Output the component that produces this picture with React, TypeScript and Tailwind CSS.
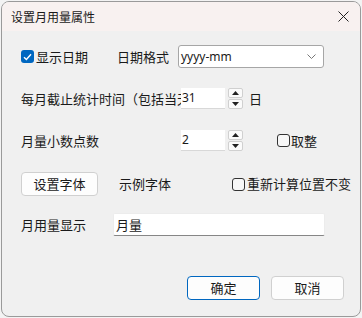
import React from "react";

const font = { fontFamily: '"Noto Sans CJK SC", "Noto Sans", sans-serif' };

function Spinner() {
  return (
    <div className="ml-[3px] flex h-[21px] w-[15px] flex-col justify-between">
      <div className="flex h-[10px] w-[15px] items-center justify-center rounded-[2px] border border-[#d0d0d0] bg-[#fbfbfb]">
        <svg width="7" height="4" viewBox="0 0 7 4"><path d="M3.5 0 L7 4 L0 4 Z" fill="#222" /></svg>
      </div>
      <div className="flex h-[10px] w-[15px] items-center justify-center rounded-[2px] border border-[#d0d0d0] bg-[#fbfbfb]">
        <svg width="7" height="4" viewBox="0 0 7 4"><path d="M0 0 L7 0 L3.5 4 Z" fill="#222" /></svg>
      </div>
    </div>
  );
}

function Box({ checked = false }: { checked?: boolean }) {
  if (checked)
    return (
      <div className="flex h-[13px] w-[13px] items-center justify-center rounded-[3px] bg-[#0067c0]">
        <svg width="9" height="8" viewBox="0 0 9 8"><path d="M1 4.2 L3.4 6.5 L8 1.3" stroke="#fff" strokeWidth="1.4" fill="none" /></svg>
      </div>
    );
  return <div className="h-[13px] w-[13px] rounded-[3px] border border-[#333] bg-[#f7f7f7]" />;
}

export default function App() {
  return (
    <div className="h-[318px] w-[362px] bg-[#f3f3f3] p-px text-[13px] text-[#1a1a1a]" style={font}>
      <div className="flex h-[316px] w-[360px] flex-col overflow-hidden rounded-[8px] border border-[#9a9a9a] bg-[#f0f0f0]">
        <div className="flex h-[29px] shrink-0 items-center justify-between bg-[#f8f1f0] pl-[9px] pr-[9px]">
          <span className="text-[12px]">设置月用量属性</span>
          <svg width="11" height="11" viewBox="0 0 11 11" className="mr-[2px]"><path d="M0.5 0.5 L10.5 10.5 M10.5 0.5 L0.5 10.5" stroke="#222" strokeWidth="1" /></svg>
        </div>
        <div className="flex flex-col pl-[19px]">
          <div className="mt-[14px] flex h-[23px] items-center">
            <Box checked />
            <span className="ml-[2px] w-[81px]">显示日期</span>
            <span className="w-[61px]">日期格式</span>
            <div className="flex h-[23px] w-[146px] items-center justify-between rounded-[3px] border border-[#a6a6a6] bg-white pl-[2px] pr-[7px]">
              <span className="text-[12px]" style={{ fontFamily: '"Noto Sans", sans-serif' }}>yyyy-mm</span>
              <svg width="9" height="5" viewBox="0 0 9 5"><path d="M0.5 0.5 L4.5 4.5 L8.5 0.5" stroke="#777" fill="none" /></svg>
            </div>
          </div>
          <div className="mt-[20px] flex h-[21px] items-center">
            <div className="w-[160px] overflow-hidden whitespace-nowrap">每月截止统计时间（包括当天）</div>
            <div className="flex h-[21px] w-[44px] items-center border-b border-[#d8d8d8] bg-white pl-[1px] text-[12px]" style={{ fontFamily: '"Noto Sans", sans-serif' }}>31</div>
            <Spinner />
            <span className="ml-[6px]">日</span>
          </div>
          <div className="mt-[21px] flex h-[21px] items-center">
            <div className="w-[160px]">月量小数点数</div>
            <div className="flex h-[21px] w-[44px] items-center border-b border-[#d8d8d8] bg-white pl-[1px] text-[12px]" style={{ fontFamily: '"Noto Sans", sans-serif' }}>2</div>
            <Spinner />
            <div className="ml-[34px] flex items-center">
              <Box />
              <span className="ml-[1px]">取整</span>
            </div>
          </div>
          <div className="mt-[21px] flex h-[24px] items-center">
            <div className="flex h-[24px] w-[77px] items-center justify-center rounded-[4px] border border-[#d0d0d0] bg-[#fdfdfd]">设置字体</div>
            <span className="ml-[21px] w-[113px]">示例字体</span>
            <Box />
            <span className="ml-[2px]">重新计算位置不变</span>
          </div>
          <div className="mt-[17px] flex h-[23px] items-center">
            <div className="w-[92px]">月用量显示</div>
            <div className="flex h-[23px] w-[212px] items-center rounded-[2px] border border-[#ececec] border-b-[#868686] bg-white pl-[2px]">月量</div>
          </div>
          <div className="mt-[40px] flex h-[24px] items-center pl-[166px]">
            <div className="flex h-[24px] w-[73px] items-center justify-center rounded-[4px] border border-[#0067c0] bg-[#fdfdfd]">确定</div>
            <div className="ml-[11px] flex h-[24px] w-[73px] items-center justify-center rounded-[4px] border border-[#d0d0d0] bg-[#fdfdfd]">取消</div>
          </div>
        </div>
      </div>
    </div>
  );
}
